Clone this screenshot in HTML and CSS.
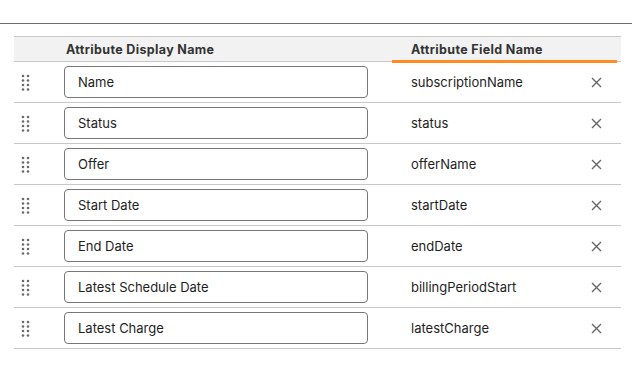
FILE: index.html
```html
<!DOCTYPE html>
<html lang="en">
<head>
    <meta charset="UTF-8">
    <meta name="viewport" content="width=device-width, initial-scale=1.0">
    <title>Attributes</title>
    <link rel="stylesheet" href="styles.css">
</head>
<body>
    <div class="topbar"></div>
    <div class="attr-table">
        <div class="attr-head">
            <div></div>
            <div class="head-display">Attribute Display Name</div>
            <div class="head-field">Attribute Field Name</div>
        </div>
        <div id="rows"></div>
    </div>
    <script>
        const attributes = [
            { display: "Name", field: "subscriptionName" },
            { display: "Status", field: "status" },
            { display: "Offer", field: "offerName" },
            { display: "Start Date", field: "startDate" },
            { display: "End Date", field: "endDate" },
            { display: "Latest Schedule Date", field: "billingPeriodStart" },
            { display: "Latest Charge", field: "latestCharge" }
        ];

        const rows = document.getElementById("rows");
        attributes.forEach(attr => {
            const row = document.createElement("div");
            row.classList.add("attr-row");
            row.innerHTML = `
                <div class="handle">
                    <svg width="10" height="18" viewBox="0 0 10 18">
                        <circle cx="2" cy="2" r="1.3"/><circle cx="7" cy="2" r="1.3"/>
                        <circle cx="2" cy="6.5" r="1.3"/><circle cx="7" cy="6.5" r="1.3"/>
                        <circle cx="2" cy="11" r="1.3"/><circle cx="7" cy="11" r="1.3"/>
                        <circle cx="2" cy="15.5" r="1.3"/><circle cx="7" cy="15.5" r="1.3"/>
                    </svg>
                </div>
                <input class="display-input" type="text" value="${attr.display}">
                <div class="field-name">${attr.field}</div>
                <button class="remove">
                    <svg width="11" height="11" viewBox="0 0 11 11">
                        <path d="M1 1 L10 10 M10 1 L1 10"/>
                    </svg>
                </button>
            `;
            rows.appendChild(row);
        });
    </script>
</body>
</html>
```

FILE: styles.css
```css
body {
    margin: 0;
    padding: 0;
    font-family: Inter, "Liberation Sans", Arial, sans-serif;
    background: white;
    color: #222;
}
.topbar {
    height: 23px;
    border-bottom: 1px solid #6b6b6b;
}
.attr-table {
    margin: 12px 11px 0 14px;
}
.attr-head,
.attr-row {
    display: grid;
    grid-template-columns: 50px 304px 1fr 50px;
    border-bottom: 1px solid #c8c8c8;
}
.attr-head {
    background: #f2f2f2;
    border-top: 1px solid #c8c8c8;
    height: 24px;
    align-items: center;
    font-size: 12.5px;
    font-weight: 700;
    letter-spacing: 0.35px;
    color: #333;
}
.head-display {
    padding-left: 2px;
}
.head-field {
    grid-column: 3 / 5;
    margin-left: 24px;
    padding-left: 19px;
    position: relative;
    height: 100%;
    display: flex;
    align-items: center;
}
.head-field::after {
    content: "";
    position: absolute;
    left: 0;
    right: 4px;
    bottom: -2px;
    height: 3px;
    background: #ff8a1f;
}
.attr-row {
    height: 40px;
    align-items: center;
}
.handle {
    padding-left: 7px;
    padding-top: 1px;
    display: flex;
    align-items: center;
}
.handle svg {
    fill: #6a6a6a;
}
.display-input {
    box-sizing: border-box;
    height: 32px;
    width: 304px;
    margin: 0;
    padding: 0 12px 0 13px;
    border: 1px solid #777;
    border-radius: 4px;
    font-family: inherit;
    font-size: 13px;
    color: #1e1e1e;
    outline: none;
}
.field-name {
    margin-left: 24px;
    padding-left: 19px;
    font-size: 13px;
    color: #1e1e1e;
}
.remove {
    background: none;
    border: none;
    padding: 0;
    cursor: pointer;
    display: flex;
    justify-content: center;
    align-items: center;
}
.remove svg {
    stroke: #666;
    stroke-width: 1.4;
    fill: none;
}
```
